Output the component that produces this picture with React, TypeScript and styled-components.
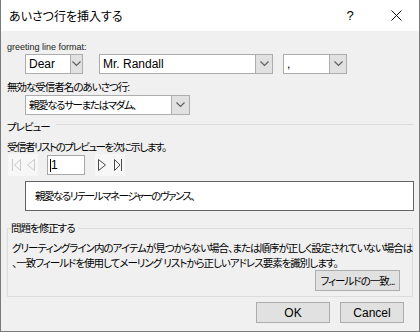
import { FC } from "react"
import styled, { createGlobalStyle } from "styled-components"

const GlobalStyle = createGlobalStyle`
  html, body {
    margin: 0;
    padding: 0;
    background: #ffffff;
  }
  * {
    box-sizing: border-box;
  }
`

const Window = styled.div`
  width: 420px;
  height: 332px;
  display: flex;
  flex-direction: column;
  border: 1px solid #7a7a7a;
  border-top: none;
  background: #f0f0f0;
  font-family: "Liberation Sans", "Noto Sans CJK JP", sans-serif;
  font-size: 10.5px;
  letter-spacing: -1px;
  font-feature-settings: "palt" 1;
  color: #000;
`

const TitleBar = styled.div`
  height: 31px;
  display: flex;
  align-items: center;
  background: #ffffff;
  padding-left: 8px;
`

const Title = styled.div`
  flex: 1;
  font-size: 12px;
  letter-spacing: 0;
`

const TitleButton = styled.div`
  width: 46px;
  height: 31px;
  display: flex;
  align-items: center;
  justify-content: center;
  font-size: 13px;
  letter-spacing: 0;
`

const Body = styled.div`
  flex: 1;
  display: flex;
  flex-direction: column;
  padding: 9px 5px 7px 6px;
`

const Label = styled.div<{ $top?: number; $tight?: boolean }>`
  height: 14px;
  line-height: 14px;
  margin-top: ${({ $top }) => $top ?? 0}px;
  letter-spacing: ${({ $tight }) => ($tight ? "-1.5px" : "-1px")};
  white-space: nowrap;
`

const FormatLabel = styled.div`
  height: 14px;
  line-height: 14px;
  font-size: 9px;
  letter-spacing: 0;
  color: #222;
  white-space: nowrap;
`

const ComboRow = styled.div<{ $top?: number }>`
  display: flex;
  margin-left: 18px;
  margin-top: ${({ $top }) => $top ?? 0}px;
`

const ComboBox = styled.div<{ $width: number; $gap?: number }>`
  width: ${({ $width }) => $width}px;
  height: 20px;
  margin-left: ${({ $gap }) => $gap ?? 0}px;
  display: flex;
  border: 1px solid #adadad;
  background: #ffffff;
`

const ComboValue = styled.div<{ $latin?: boolean }>`
  flex: 1;
  padding-left: 3px;
  line-height: 18px;
  font-size: ${({ $latin }) => ($latin ? "12px" : "10.5px")};
  letter-spacing: ${({ $latin }) => ($latin ? "0" : "-1.4px")};
  white-space: nowrap;
  overflow: hidden;
`

const ComboButton = styled.div<{ $width: number }>`
  width: ${({ $width }) => $width}px;
  display: flex;
  align-items: center;
  justify-content: center;
  background: #e1e1e1;
  border-left: 1px solid #adadad;
`

const SectionHeader = styled.div`
  display: flex;
  align-items: center;
  height: 14px;
  margin-top: 4px;
  gap: 6px;
`

const SectionLine = styled.div`
  flex: 1;
  height: 1px;
  margin-top: -3px;
  background: #dcdcdc;
`

const NavRow = styled.div`
  display: flex;
  align-items: flex-start;
  height: 22px;
  margin-left: 1px;
`

const NavGroup = styled.div<{ $gap?: number }>`
  display: flex;
  background: #f7f7f7;
  margin-left: ${({ $gap }) => $gap ?? 0}px;
`

const NavButton = styled.div`
  width: 15px;
  height: 22px;
  display: flex;
`

const PageInput = styled.div`
  width: 38px;
  height: 20px;
  margin: 1px 0 0 9px;
  border: 1px solid #a8a8a8;
  background: #ffffff;
  line-height: 18px;
  font-size: 12px;
  letter-spacing: 0;
  padding-left: 3px;
  position: relative;
  &::before {
    content: "";
    position: absolute;
    left: 2px;
    top: 3px;
    width: 1px;
    height: 13px;
    background: #000;
  }
`

const PreviewBox = styled.div`
  height: 30px;
  margin: 5px 0 0 18px;
  border: 1px solid #646464;
  background: #ffffff;
  padding-left: 9px;
  line-height: 28px;
  letter-spacing: -1.5px;
  white-space: nowrap;
`

const GroupBox = styled.fieldset`
  margin: 10px 1px 0 0;
  padding: 6px 12px 5px 4px;
  border: 1px solid #dcdcdc;
  display: flex;
  flex-direction: column;
  min-width: 0;
`

const Legend = styled.legend`
  padding: 0 3px 0 0;
  margin-left: -1px;
  line-height: 14px;
`

const HelpText = styled.div`
  line-height: 15px;
  white-space: nowrap;
  letter-spacing: -1px;
`

const Button = styled.div<{ $width: number; $gap?: number; $latin?: boolean }>`
  width: ${({ $width }) => $width}px;
  height: 21px;
  margin-left: ${({ $gap }) => $gap ?? 0}px;
  border: 1px solid #adadad;
  background: #e1e1e1;
  display: flex;
  align-items: center;
  justify-content: center;
  font-size: ${({ $latin }) => ($latin ? "12px" : "10.5px")};
  letter-spacing: ${({ $latin }) => ($latin ? "0" : "-1px")};
  white-space: nowrap;
`

const FieldButtonRow = styled.div`
  display: flex;
  justify-content: flex-end;
  margin-top: -1px;
`

const DialogButtons = styled.div`
  display: flex;
  justify-content: flex-end;
  margin: 5px 10px 0 0;
`

const Chevron: FC = () => (
  <svg width="9" height="6" viewBox="0 0 9 6">
    <path d="M0.5 0.5 L4.5 4.5 L8.5 0.5" fill="none" stroke="#5f5f5f" strokeWidth="1.2" />
  </svg>
)

const Combo: FC<{ width: number; button: number; gap?: number; value: string; latin?: boolean }> = ({
  width,
  button,
  gap,
  value,
  latin,
}) => (
  <ComboBox $width={width} $gap={gap}>
    <ComboValue $latin={latin}>{value}</ComboValue>
    <ComboButton $width={button}>
      <Chevron />
    </ComboButton>
  </ComboBox>
)

const NavIcon: FC<{ kind: "first" | "prev" | "next" | "last" }> = ({ kind }) => {
  const color = kind === "first" || kind === "prev" ? "#c9c9c9" : "#4a4a4a"
  return (
    <NavButton>
      <svg width="15" height="22" viewBox="0 0 15 22">
        {kind === "first" && (
          <>
            <path d="M4.5 5 V17" stroke={color} strokeWidth="1" />
            <path d="M12.5 5.5 L6.5 11 L12.5 16.5 Z" fill="none" stroke={color} strokeWidth="1" />
          </>
        )}
        {kind === "prev" && (
          <path d="M11.5 5.5 L4.5 11 L11.5 16.5 Z" fill="none" stroke={color} strokeWidth="1" />
        )}
        {kind === "next" && (
          <path d="M3.5 5.5 L10.5 11 L3.5 16.5 Z" fill="none" stroke={color} strokeWidth="1" />
        )}
        {kind === "last" && (
          <>
            <path d="M4.5 5.5 L10 11 L4.5 16.5 Z" fill="none" stroke={color} strokeWidth="1" />
            <path d="M11.5 5 V17" stroke={color} strokeWidth="1" />
          </>
        )}
      </svg>
    </NavButton>
  )
}

const App: FC = () => {
  return (
    <>
      <GlobalStyle />
      <Window>
        <TitleBar>
          <Title>あいさつ行を挿入する</Title>
          <TitleButton>?</TitleButton>
          <TitleButton>
            <svg width="11" height="11" viewBox="0 0 11 11">
              <path d="M0.5 0.5 L10.5 10.5 M10.5 0.5 L0.5 10.5" stroke="#111" strokeWidth="1" />
            </svg>
          </TitleButton>
        </TitleBar>
        <Body>
          <FormatLabel>greeting line format:</FormatLabel>
          <ComboRow>
            <Combo width={58} button={12} value="Dear" latin />
            <Combo width={174} button={17} gap={16} value="Mr. Randall" latin />
            <Combo width={64} button={17} gap={10} value="," latin />
          </ComboRow>
          <Label $top={6}>無効な受信者名のあいさつ行:</Label>
          <ComboRow $top={1}>
            <Combo width={165} button={18} value="親愛なるサーまたはマダム、" />
          </ComboRow>
          <SectionHeader>
            <span>プレビュー</span>
            <SectionLine />
          </SectionHeader>
          <Label $top={7} $tight>受信者リストのプレビューを次に示します。</Label>
          <NavRow>
            <NavGroup>
              <NavIcon kind="first" />
              <NavIcon kind="prev" />
            </NavGroup>
            <PageInput>1</PageInput>
            <NavGroup $gap={10}>
              <NavIcon kind="next" />
              <NavIcon kind="last" />
            </NavGroup>
          </NavRow>
          <PreviewBox>親愛なるリテールマネージャーのヴァンス、</PreviewBox>
          <GroupBox>
            <Legend>問題を修正する</Legend>
            <HelpText>グリーティングライン内のアイテムが見つからない場合、または順序が正しく設定されていない場合は</HelpText>
            <HelpText>、一致フィールドを使用してメーリング リストから正しいアドレス要素を識別します。</HelpText>
            <FieldButtonRow>
              <Button $width={85}>フィールドの一致...</Button>
            </FieldButtonRow>
          </GroupBox>
          <DialogButtons>
            <Button $width={74} $latin>OK</Button>
            <Button $width={64} $gap={10} $latin>Cancel</Button>
          </DialogButtons>
        </Body>
      </Window>
    </>
  )
}

export default App
